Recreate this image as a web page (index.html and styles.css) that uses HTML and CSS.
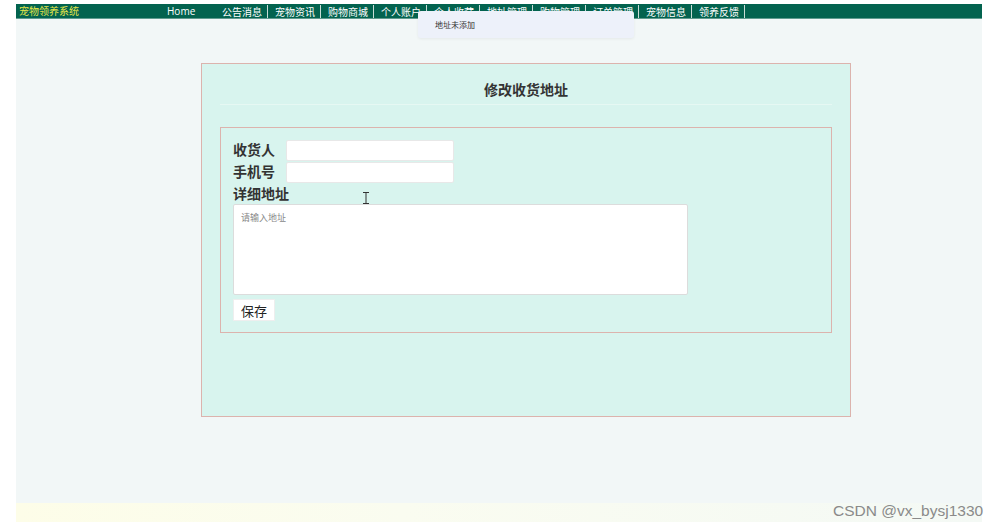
FILE: index.html
```html
<!DOCTYPE html>
<html lang="zh">

<head>
  <meta charset="UTF-8">
  <meta name="viewport" content="width=device-width, initial-scale=1.0">
  <title>修改收货地址</title>
  <link rel="stylesheet" href="styles.css">
</head>

<body>

  <div class="page">
    <header class="topbar">
      <span class="brand">宠物领养系统</span>
      <ul class="menu">
        <li class="home">Home</li>
        <li>公告消息</li>
        <li>宠物资讯</li>
        <li>购物商城</li>
        <li>个人账户</li>
        <li>个人收藏</li>
        <li>地址管理</li>
        <li>购物管理</li>
        <li>订单管理</li>
        <li>宠物信息</li>
        <li>领养反馈</li>
      </ul>
      <div class="dropdown">地址未添加</div>
    </header>

    <main class="content">
      <section class="card">
        <h2 class="card-title">修改收货地址</h2>
        <form class="address-form">
          <div class="form-row">
            <label for="receiver">收货人</label>
            <input type="text" id="receiver">
          </div>
          <div class="form-row">
            <label for="phone">手机号</label>
            <input type="text" id="phone">
          </div>
          <div class="form-label">详细地址</div>
          <textarea id="address" placeholder="请输入地址"></textarea>
          <button type="button" class="save-btn">保存</button>
          <svg class="cursor" width="8" height="12" viewBox="0 0 8 12">
            <path d="M1 0.5h6M1 11.5h6M4 0.5v11" stroke="#333" stroke-width="1" fill="none" />
          </svg>
        </form>
      </section>
    </main>

    <footer class="footer"></footer>
  </div>

  <span class="watermark">CSDN @vx_bysj1330</span>

</body>

</html>
```

FILE: styles.css
```css
body {
  margin: 0;
  background: #fff;
  font-family: "Noto Sans CJK SC", "Noto Sans", sans-serif;
  color: #333;
}

.page {
  width: 966px;
  margin: 4px 0 0 16px;
}

.topbar {
  position: relative;
  display: flex;
  align-items: center;
  height: 15px;
  background: #03634f;
  border-bottom: 1px solid #5f9c8f;
  box-sizing: border-box;
}

.brand {
  width: 150px;
  padding-left: 3px;
  box-sizing: border-box;
  color: #e6e64a;
  font-size: 10px;
  line-height: 14px;
}

.menu {
  display: flex;
  list-style: none;
  margin: 0;
  padding: 0;
}

.menu li {
  width: 53px;
  height: 13px;
  padding-left: 7px;
  box-sizing: border-box;
  border-right: 1px solid #c9dcd6;
  color: #fff;
  font-size: 10px;
  line-height: 13px;
  white-space: nowrap;
}

.menu li.home {
  width: 49px;
  padding-left: 1px;
  border-right: none;
  font-family: "Open Sans", sans-serif;
}

.dropdown {
  position: absolute;
  left: 402px;
  top: 7px;
  width: 216px;
  height: 27px;
  padding-left: 17px;
  box-sizing: border-box;
  background: #edf1fa;
  border-radius: 3px;
  box-shadow: 0 1px 3px rgba(0, 0, 0, 0.06);
  font-size: 8px;
  line-height: 27px;
  color: #333;
}

.content {
  height: 484px;
  padding-top: 44px;
  box-sizing: border-box;
  background: #f2f7f7;
}

.card {
  width: 650px;
  height: 354px;
  margin-left: 185px;
  padding: 0 18px;
  box-sizing: border-box;
  background: #d8f4ee;
  border: 1px solid #dcb3ad;
}

.card-title {
  margin: 0;
  padding: 18px 0 7px;
  font-size: 14px;
  line-height: 15px;
  text-align: center;
  color: #333;
  border-bottom: 1px solid #e6f8f3;
}

.address-form {
  position: relative;
  margin-top: 22px;
  padding: 12px 12px 11px;
  border: 1px solid #dcb3ad;
}

.form-row {
  display: flex;
  align-items: center;
  margin-bottom: 1px;
}

.form-row label,
.form-label {
  font-size: 14px;
  font-weight: bold;
  color: #333;
}

.form-row label {
  width: 53px;
  position: relative;
  top: -2px;
}

.form-row input {
  width: 168px;
  height: 21px;
  padding: 0 4px;
  box-sizing: border-box;
  border: 1px solid #e8e8e8;
  border-radius: 2px;
  background: #fff;
  outline: none;
}

.form-label {
  line-height: 18px;
  margin-bottom: 2px;
}

textarea {
  display: block;
  width: 455px;
  height: 91px;
  padding: 6px 7px;
  box-sizing: border-box;
  border: 1px solid #dcdcdc;
  border-radius: 2px;
  background: #fff;
  font-family: "Noto Sans CJK SC", sans-serif;
  font-size: 9px;
  resize: none;
  outline: none;
}

textarea::placeholder {
  color: #888;
}

.save-btn {
  display: block;
  width: 42px;
  height: 22px;
  margin-top: 4px;
  padding: 0;
  border: 1px solid #eee;
  background: #fff;
  font-family: "Noto Sans CJK SC", sans-serif;
  font-size: 13px;
  color: #222;
}

.cursor {
  position: absolute;
  left: 141px;
  top: 64px;
}

.footer {
  height: 19px;
  background: linear-gradient(to right, #fdfde8, #fafcf0 40%, #f4f9f5);
}

.watermark {
  position: absolute;
  left: 833px;
  top: 502px;
  font-family: "Liberation Sans", Arial, sans-serif;
  font-size: 15.5px;
  color: #8a8a8a;
}
```
